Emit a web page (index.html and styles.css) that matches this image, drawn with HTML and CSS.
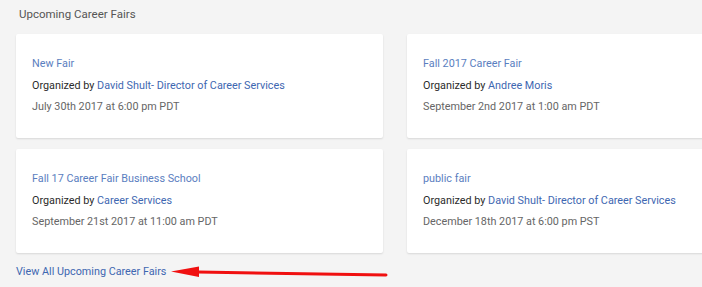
FILE: index.html
```html
<!DOCTYPE html>
<html lang="en">
<head>
    <meta charset="UTF-8">
    <meta name="viewport" content="width=device-width, initial-scale=1.0">
    <title>Upcoming Career Fairs</title>
    <link rel="stylesheet" href="styles.css">
</head>
<body>
    <section class="fairs">
        <h2 class="fairs-title">Upcoming Career Fairs</h2>

        <div class="fair-grid">
            <div class="fair-card">
                <a class="fair-name" href="#">New Fair</a>
                <p class="fair-org">Organized by <a href="#">David Shult- Director of Career Services</a></p>
                <p class="fair-date">July 30th 2017 at 6:00 pm PDT</p>
            </div>
            <div class="fair-card">
                <a class="fair-name" href="#">Fall 2017 Career Fair</a>
                <p class="fair-org">Organized by <a href="#">Andree Moris</a></p>
                <p class="fair-date">September 2nd 2017 at 1:00 am PDT</p>
            </div>
            <div class="fair-card">
                <a class="fair-name" href="#">Fall 17 Career Fair Business School</a>
                <p class="fair-org">Organized by <a href="#">Career Services</a></p>
                <p class="fair-date">September 21st 2017 at 11:00 am PDT</p>
            </div>
            <div class="fair-card">
                <a class="fair-name" href="#">public fair</a>
                <p class="fair-org">Organized by <a href="#">David Shult- Director of Career Services</a></p>
                <p class="fair-date">December 18th 2017 at 6:00 pm PST</p>
            </div>
        </div>

        <div class="view-all">
            <a href="#">View All Upcoming Career Fairs</a>
            <svg class="arrow" width="222" height="14" viewBox="0 0 222 14">
                <path d="M27 6 L215 9" stroke="#f01010" stroke-width="3" stroke-linecap="round" fill="none"/>
                <polygon points="0,5.5 28,0.5 28,11" fill="#f01010"/>
            </svg>
        </div>
    </section>
</body>
</html>
```

FILE: styles.css
```css
body {
    margin: 0;
    background-color: #f4f4f4;
    font-family: Roboto, "Liberation Sans", sans-serif;
    font-size: 10.8px;
    color: #333;
    overflow: hidden;
}

a {
    color: #3e67b1;
    text-decoration: none;
}

.fairs {
    padding: 6px 0 0 16px;
}

.fairs-title {
    margin: 0 0 0 3px;
    font-size: 11.5px;
    font-weight: 400;
    line-height: 16px;
    color: #555;
}

/* 2열 카드, 오른쪽 카드는 화면 밖으로 잘림 */
.fair-grid {
    display: grid;
    grid-template-columns: 367px 367px;
    column-gap: 24px;
    row-gap: 11px;
    margin-top: 12px;
    width: 800px;
}

.fair-card {
    background-color: #fff;
    border-radius: 2px;
    box-shadow: 0 1px 2px rgba(0, 0, 0, 0.12);
    padding: 19px 16px 20px;
    height: 104px;
    box-sizing: border-box;
}

.fair-card p {
    margin: 0;
}

.fair-name,
.fair-org,
.fair-date {
    display: block;
    line-height: 21.5px;
}

.fair-name {
    color: #5a7ec0;
}

.fair-org {
    color: #2b2b2b;
}

.fair-date {
    color: #666;
}

.view-all {
    display: flex;
    align-items: center;
    gap: 5px;
    margin-top: 10px;
    line-height: 16px;
}

.view-all a {
    color: #3e67b1;
}

.arrow {
    display: block;
    margin-top: 3px;
}
```
